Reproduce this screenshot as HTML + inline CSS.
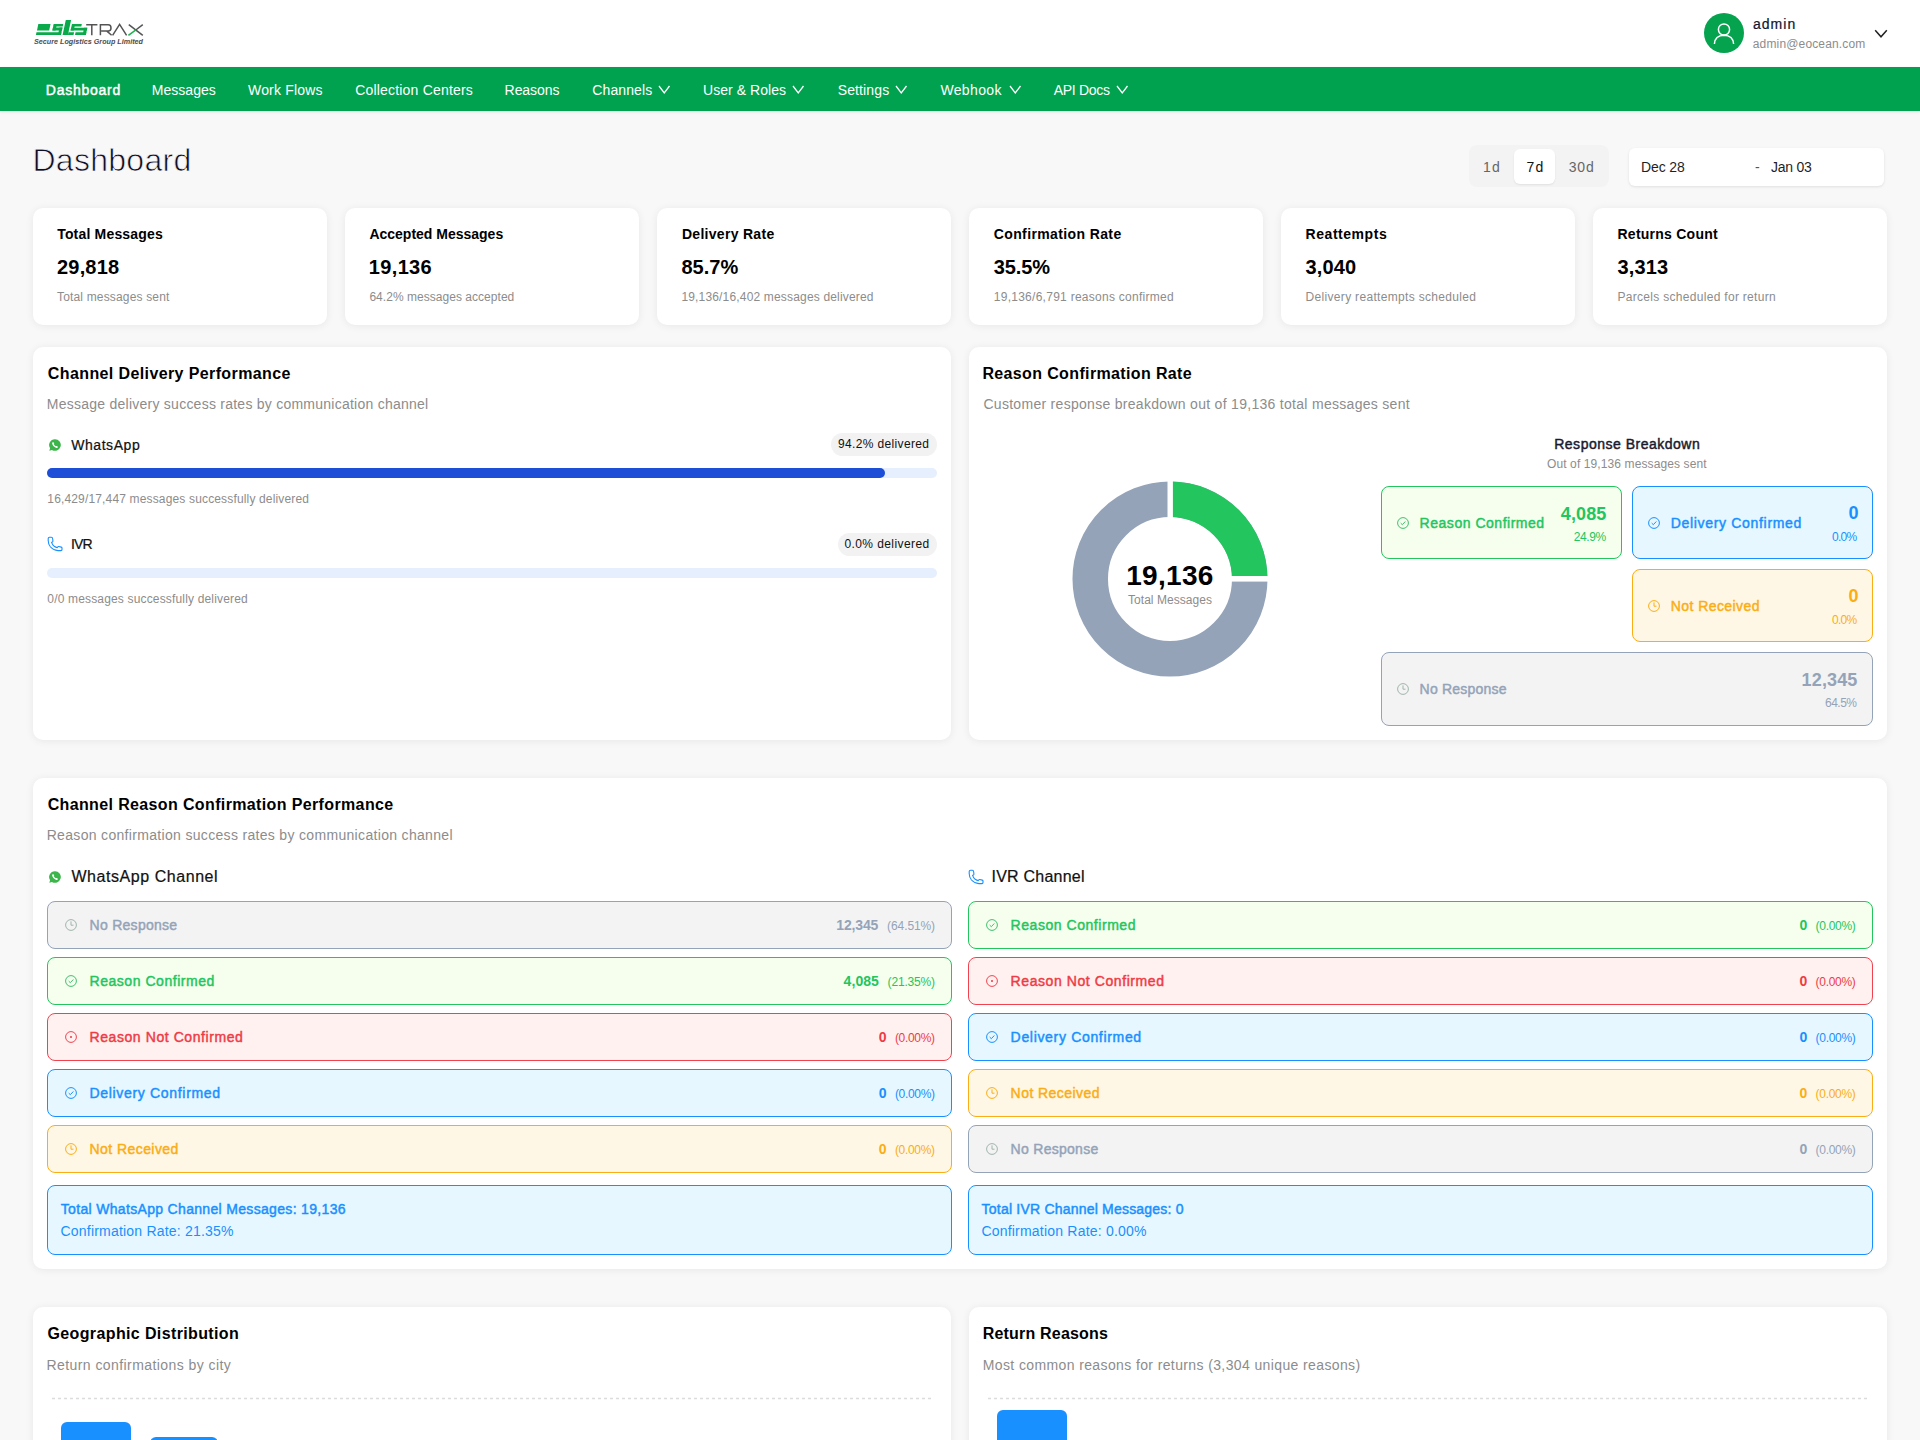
<!DOCTYPE html>
<html lang="en">
<head>
<meta charset="utf-8">
<title>SLS Trax - Dashboard</title>
<style>
  html, body { margin:0; padding:0; }
  body { width:1920px; height:1440px; overflow:hidden; position:relative; background:#f8f8f8; font-family:"Liberation Sans", sans-serif; }
  .abs { position:absolute; }
  .t { position:absolute; white-space:nowrap; line-height:1; font-family:"Liberation Sans", sans-serif; }
  header.top { position:absolute; left:0; top:0; width:1920px; height:67px; background:#fff; }
  nav.main { position:absolute; left:0; top:67px; width:1920px; height:44px; background:#01a24f; box-shadow:0 1px 3px rgba(0,0,0,0.10); }
  .card { position:absolute; background:#fff; border-radius:10px; box-shadow:0 1px 8px rgba(0,0,0,0.07); }
  .pill { position:absolute; background:#f2f2f2; border-radius:12px; }
  .track { position:absolute; height:10px; border-radius:5px; background:#e5effd; }
  .fill { position:absolute; height:10px; border-radius:5px; background:#1d4ed8; }
  .box { position:absolute; box-sizing:border-box; border:1px solid; border-radius:8px; }
  .g { border-color:#22c55e; background:#f6ffed; }
  .b { border-color:#1890ff; background:#e6f7ff; }
  .o { border-color:#faad14; background:#fff7e6; }
  .r { border-color:#f0434f; background:#fff1f0; }
  .s { border-color:#94a3b8; background:#f3f3f3; }
  .ico { position:absolute; }
  .dots { position:absolute; height:0; border-top:1.5px dashed #d9d9d9; }
  .bar { position:absolute; background:#1890ff; border-radius:6px 6px 0 0; }
</style>
</head>
<body>
<header class="top">
  <!-- logo -->
  <svg class="abs" style="left:0;top:0" width="160" height="50" viewBox="0 0 160 50">
    <g fill="#0aa94a" transform="translate(7.44,0) skewX(-12)">
      <rect x="36" y="24" width="12.2" height="6.4"/>
      <rect x="35.9" y="32.25" width="25" height="2.75"/>
      <rect x="51.6" y="24" width="9.3" height="2.5"/>
      <rect x="51.4" y="24" width="3.2" height="6.4"/>
      <rect x="51.4" y="27.6" width="9.5" height="2.8"/>
      <rect x="57.9" y="27.6" width="3" height="7.4"/>
      <polygon points="65.8,20 71.1,20 67.9,35 62.6,35" transform="skewX(12) translate(-7.44,0) translate(0,0)"/>
      <rect x="67.9" y="32.25" width="5.6" height="2.75"/>
      <rect x="70.5" y="24" width="9" height="2.5"/>
      <rect x="69.6" y="24" width="3.2" height="6.4"/>
      <rect x="69.6" y="27.8" width="16.2" height="2.6"/>
      <rect x="82.6" y="27.8" width="3.2" height="7.2"/>
      <rect x="75" y="32.25" width="10.8" height="2.75"/>
    </g>
    <g fill="none" stroke="#545454" stroke-width="1.5">
      <path d="M86.2 24.7 H97.4 M91.8 24.7 V35.3"/>
      <path d="M100.4 35.3 V24.7 H108.2 Q111 24.7 111 27.9 Q111 30.9 108.2 30.9 H101.2 M106.6 30.9 L111.6 35.3"/>
      <path d="M112.6 35.3 L119.6 24.4 L126.6 35.3"/>
      <path d="M128.8 24.6 L142.8 35.3"/>
      <path d="M142.8 24.6 L135.8 30"/>
    </g>
    <path d="M135.9 29.9 L128.4 35.4" stroke="#1fb34e" stroke-width="1.6" fill="none"/>
    <text x="34" y="44.2" font-family="Liberation Sans" font-weight="700" font-style="italic" font-size="8" fill="#4d4d4d" letter-spacing="0.02" textLength="109" lengthAdjust="spacingAndGlyphs">Secure Logistics Group Limited</text>
  </svg>
  <!-- avatar -->
  <svg class="abs" style="left:1704px;top:13px" width="40" height="40" viewBox="0 0 40 40">
    <circle cx="20" cy="20" r="20" fill="#06a34f"/>
    <circle cx="20" cy="16.5" r="5.6" fill="none" stroke="#fff" stroke-width="1.5"/>
    <path d="M10.4 31 Q10.9 22.5 20 22.3 Q29.1 22.5 29.6 31" fill="none" stroke="#fff" stroke-width="1.5"/>
  </svg>
  <svg class="abs" style="left:1874px;top:29px" width="14" height="10" viewBox="0 0 14 10">
    <path d="M1.2 1.2 L7 7.8 L12.8 1.2" fill="none" stroke="#222" stroke-width="1.5"/>
  </svg>
</header>
<nav class="main">
  <svg class="abs" style="left:658px;top:18px" width="13" height="10" viewBox="0 0 13 10"><path d="M1 1 L6.25 8 L11.5 1" fill="none" stroke="#fff" stroke-width="1.3"/></svg>
  <svg class="abs" style="left:792px;top:18px" width="13" height="10" viewBox="0 0 13 10"><path d="M1 1 L6.25 8 L11.5 1" fill="none" stroke="#fff" stroke-width="1.3"/></svg>
  <svg class="abs" style="left:895px;top:18px" width="13" height="10" viewBox="0 0 13 10"><path d="M1 1 L6.25 8 L11.5 1" fill="none" stroke="#fff" stroke-width="1.3"/></svg>
  <svg class="abs" style="left:1008.5px;top:18px" width="13" height="10" viewBox="0 0 13 10"><path d="M1 1 L6.25 8 L11.5 1" fill="none" stroke="#fff" stroke-width="1.3"/></svg>
  <svg class="abs" style="left:1115.5px;top:18px" width="13" height="10" viewBox="0 0 13 10"><path d="M1 1 L6.25 8 L11.5 1" fill="none" stroke="#fff" stroke-width="1.3"/></svg>
</nav>

<!-- time range -->
<div class="abs" style="left:1469px;top:145px;width:140px;height:42px;background:#f3f3f3;border-radius:8px"></div>
<div class="abs" style="left:1514px;top:149px;width:41px;height:35px;background:#fff;border-radius:6px;box-shadow:0 1px 2px rgba(0,0,0,0.08)"></div>
<div class="abs" style="left:1629px;top:148px;width:255px;height:38px;background:#fff;border-radius:6px;box-shadow:0 1px 3px rgba(0,0,0,0.10)"></div>

<!-- stat cards -->
<div class="card" style="left:33px;top:208px;width:294px;height:117px"></div>
<div class="card" style="left:345px;top:208px;width:294px;height:117px"></div>
<div class="card" style="left:657px;top:208px;width:294px;height:117px"></div>
<div class="card" style="left:969px;top:208px;width:294px;height:117px"></div>
<div class="card" style="left:1281px;top:208px;width:294px;height:117px"></div>
<div class="card" style="left:1593px;top:208px;width:294px;height:117px"></div>

<!-- row 2 -->
<div class="card" style="left:33px;top:347px;width:918px;height:393px"></div>
<div class="card" style="left:969px;top:347px;width:918px;height:393px"></div>

<div class="pill" style="left:830.5px;top:433px;width:106px;height:23px"></div>
<div class="track" style="left:47px;top:468px;width:890px"></div>
<div class="fill" style="left:47px;top:468px;width:838px"></div>
<div class="pill" style="left:837.5px;top:533px;width:99px;height:23px"></div>
<div class="track" style="left:47px;top:568px;width:890px"></div>

<!-- whatsapp icon -->
<svg class="ico" style="left:48px;top:438px" width="14" height="14" viewBox="0 0 14 14">
  <path d="M7 1.2 A5.8 5.8 0 1 1 3.9 11.9 L1.3 12.7 L2.1 10.2 A5.8 5.8 0 0 1 7 1.2 Z" fill="#3cb54a"/>
  <path d="M4.6 4.3 Q5.2 3.8 5.6 4.4 L6.2 5.5 Q6.3 5.9 5.9 6.2 Q6.6 7.6 7.9 8.2 Q8.2 7.8 8.6 7.9 L9.7 8.5 Q10.1 8.9 9.7 9.4 Q8.8 10.3 7.4 9.6 Q4.9 8.3 4.2 6 Q3.9 5 4.6 4.3 Z" fill="#fff"/>
</svg>
<!-- phone icon -->
<svg class="ico" style="left:47px;top:536px" width="16" height="16" viewBox="0 0 16 16">
  <path d="M2.5 1.3 L4.3 1.3 Q5.6 1.3 5.7 3 L5.9 5.2 Q5.9 5.8 5.3 6.1 L4.6 6.4 Q5.2 8.6 7.2 10.3 Q8.8 11.4 10.2 11.6 L10.8 10.9 Q11.1 10.4 11.7 10.5 L14.3 11.1 Q15 11.3 15 12 L15 13.6 Q15 14.6 14 14.6 L11 14.6 Q6.5 14.3 3.5 11 Q1.2 8.3 1.2 4.5 L1.2 2.6 Q1.2 1.3 2.5 1.3 Z" fill="none" stroke="#1890ff" stroke-width="1.1"/>
</svg>

<!-- donut -->
<svg class="abs" style="left:1070px;top:479px" width="200" height="200" viewBox="0 0 200 200">
  <circle cx="100" cy="100" r="79.75" fill="none" stroke="#94a3b8" stroke-width="35.5"/>
  <path d="M100 2.5 A97.5 97.5 0 0 1 197.5 100 L162 100 A62 62 0 0 0 100 38 Z" fill="#22c55e"/>
  <rect x="97.5" y="0" width="5.4" height="40" fill="#fff"/>
  <rect x="160" y="97" width="40" height="5.6" fill="#fff"/>
</svg>

<!-- breakdown boxes -->
<div class="box g" style="left:1381px;top:486px;width:241px;height:73px"></div>
<div class="box b" style="left:1632px;top:486px;width:241px;height:73px"></div>
<div class="box o" style="left:1632px;top:569px;width:241px;height:73px"></div>
<div class="box s" style="left:1381px;top:652px;width:492px;height:74px"></div>

<!-- row 3 -->
<div class="card" style="left:33px;top:778px;width:1854px;height:491px"></div>
<svg class="ico" style="left:48px;top:870px" width="14" height="14" viewBox="0 0 14 14">
  <path d="M7 1.2 A5.8 5.8 0 1 1 3.9 11.9 L1.3 12.7 L2.1 10.2 A5.8 5.8 0 0 1 7 1.2 Z" fill="#3cb54a"/>
  <path d="M4.6 4.3 Q5.2 3.8 5.6 4.4 L6.2 5.5 Q6.3 5.9 5.9 6.2 Q6.6 7.6 7.9 8.2 Q8.2 7.8 8.6 7.9 L9.7 8.5 Q10.1 8.9 9.7 9.4 Q8.8 10.3 7.4 9.6 Q4.9 8.3 4.2 6 Q3.9 5 4.6 4.3 Z" fill="#fff"/>
</svg>
<svg class="ico" style="left:968px;top:869px" width="16" height="16" viewBox="0 0 16 16">
  <path d="M2.5 1.3 L4.3 1.3 Q5.6 1.3 5.7 3 L5.9 5.2 Q5.9 5.8 5.3 6.1 L4.6 6.4 Q5.2 8.6 7.2 10.3 Q8.8 11.4 10.2 11.6 L10.8 10.9 Q11.1 10.4 11.7 10.5 L14.3 11.1 Q15 11.3 15 12 L15 13.6 Q15 14.6 14 14.6 L11 14.6 Q6.5 14.3 3.5 11 Q1.2 8.3 1.2 4.5 L1.2 2.6 Q1.2 1.3 2.5 1.3 Z" fill="none" stroke="#1890ff" stroke-width="1.1"/>
</svg>
<div class="box s" style="left:47px;top:901px;width:905px;height:48px"></div>
<svg class="ico" style="left:65.20px;top:919.00px" width="12" height="12" viewBox="0 0 12 12"><circle cx="6" cy="6" r="5.4" fill="none" stroke="#9fb5aa" stroke-width="1"/><path d="M6 2.4 V6.2 H8.5" fill="none" stroke="#9fb5aa" stroke-width="1"/></svg>
<div class="box g" style="left:47px;top:957px;width:905px;height:48px"></div>
<svg class="ico" style="left:65.20px;top:975.00px" width="12" height="12" viewBox="0 0 12 12"><circle cx="6" cy="6" r="5.4" fill="none" stroke="#3fbf6f" stroke-width="1"/><path d="M3.7 6.1 L5.3 7.7 L8.3 4.5" fill="none" stroke="#3fbf6f" stroke-width="1"/></svg>
<div class="box r" style="left:47px;top:1013px;width:905px;height:48px"></div>
<svg class="ico" style="left:65.20px;top:1031.00px" width="12" height="12" viewBox="0 0 12 12"><circle cx="6" cy="6" r="5.4" fill="none" stroke="#f0434f" stroke-width="1"/><rect x="5.1" y="5.1" width="1.8" height="1.8" fill="#f0434f"/></svg>
<div class="box b" style="left:47px;top:1069px;width:905px;height:48px"></div>
<svg class="ico" style="left:65.20px;top:1087.00px" width="12" height="12" viewBox="0 0 12 12"><circle cx="6" cy="6" r="5.4" fill="none" stroke="#1890ff" stroke-width="1"/><path d="M3.7 6.1 L5.3 7.7 L8.3 4.5" fill="none" stroke="#1890ff" stroke-width="1"/></svg>
<div class="box o" style="left:47px;top:1125px;width:905px;height:48px"></div>
<svg class="ico" style="left:65.20px;top:1143.00px" width="12" height="12" viewBox="0 0 12 12"><circle cx="6" cy="6" r="5.4" fill="none" stroke="#faad14" stroke-width="1"/><path d="M6 2.4 V6.2 H8.5" fill="none" stroke="#faad14" stroke-width="1"/></svg>
<div class="box g" style="left:968px;top:901px;width:905px;height:48px"></div>
<svg class="ico" style="left:986.10px;top:919.00px" width="12" height="12" viewBox="0 0 12 12"><circle cx="6" cy="6" r="5.4" fill="none" stroke="#3fbf6f" stroke-width="1"/><path d="M3.7 6.1 L5.3 7.7 L8.3 4.5" fill="none" stroke="#3fbf6f" stroke-width="1"/></svg>
<div class="box r" style="left:968px;top:957px;width:905px;height:48px"></div>
<svg class="ico" style="left:986.10px;top:975.00px" width="12" height="12" viewBox="0 0 12 12"><circle cx="6" cy="6" r="5.4" fill="none" stroke="#f0434f" stroke-width="1"/><rect x="5.1" y="5.1" width="1.8" height="1.8" fill="#f0434f"/></svg>
<div class="box b" style="left:968px;top:1013px;width:905px;height:48px"></div>
<svg class="ico" style="left:986.10px;top:1031.00px" width="12" height="12" viewBox="0 0 12 12"><circle cx="6" cy="6" r="5.4" fill="none" stroke="#1890ff" stroke-width="1"/><path d="M3.7 6.1 L5.3 7.7 L8.3 4.5" fill="none" stroke="#1890ff" stroke-width="1"/></svg>
<div class="box o" style="left:968px;top:1069px;width:905px;height:48px"></div>
<svg class="ico" style="left:986.10px;top:1087.00px" width="12" height="12" viewBox="0 0 12 12"><circle cx="6" cy="6" r="5.4" fill="none" stroke="#faad14" stroke-width="1"/><path d="M6 2.4 V6.2 H8.5" fill="none" stroke="#faad14" stroke-width="1"/></svg>
<div class="box s" style="left:968px;top:1125px;width:905px;height:48px"></div>
<svg class="ico" style="left:986.10px;top:1143.00px" width="12" height="12" viewBox="0 0 12 12"><circle cx="6" cy="6" r="5.4" fill="none" stroke="#9fb5aa" stroke-width="1"/><path d="M6 2.4 V6.2 H8.5" fill="none" stroke="#9fb5aa" stroke-width="1"/></svg>
<svg class="ico" style="left:1397.00px;top:517.00px" width="12" height="12" viewBox="0 0 12 12"><circle cx="6" cy="6" r="5.4" fill="none" stroke="#3fbf6f" stroke-width="1"/><path d="M3.7 6.1 L5.3 7.7 L8.3 4.5" fill="none" stroke="#3fbf6f" stroke-width="1"/></svg>
<svg class="ico" style="left:1648.10px;top:517.00px" width="12" height="12" viewBox="0 0 12 12"><circle cx="6" cy="6" r="5.4" fill="none" stroke="#1890ff" stroke-width="1"/><path d="M3.7 6.1 L5.3 7.7 L8.3 4.5" fill="none" stroke="#1890ff" stroke-width="1"/></svg>
<svg class="ico" style="left:1648.10px;top:600.00px" width="12" height="12" viewBox="0 0 12 12"><circle cx="6" cy="6" r="5.4" fill="none" stroke="#faad14" stroke-width="1"/><path d="M6 2.4 V6.2 H8.5" fill="none" stroke="#faad14" stroke-width="1"/></svg>
<svg class="ico" style="left:1397.00px;top:683.00px" width="12" height="12" viewBox="0 0 12 12"><circle cx="6" cy="6" r="5.4" fill="none" stroke="#9fb5aa" stroke-width="1"/><path d="M6 2.4 V6.2 H8.5" fill="none" stroke="#9fb5aa" stroke-width="1"/></svg>
<div class="box b" style="left:47px;top:1185px;width:905px;height:70px"></div>
<div class="box b" style="left:968px;top:1185px;width:905px;height:70px"></div>

<!-- row 4 -->
<div class="card" style="left:33px;top:1307px;width:918px;height:200px"></div>
<div class="card" style="left:969px;top:1307px;width:918px;height:200px"></div>
<svg class="abs" style="left:52px;top:1397px" width="880" height="3"><line x1="0" y1="1.5" x2="880" y2="1.5" stroke="#dcdcdc" stroke-width="1.5" stroke-dasharray="3 3"/></svg>
<svg class="abs" style="left:988px;top:1397px" width="880" height="3"><line x1="0" y1="1.5" x2="880" y2="1.5" stroke="#dcdcdc" stroke-width="1.5" stroke-dasharray="3 3"/></svg>
<div class="bar" style="left:61px;top:1422px;width:70px;height:40px"></div>
<div class="bar" style="left:150px;top:1437px;width:68px;height:40px"></div>
<div class="bar" style="left:997px;top:1410px;width:70px;height:40px"></div>

<div class="t" style="left:1752.91px;top:16.75px;font-size:14px;font-weight:400;color:#0f1733;letter-spacing:1.034px;-webkit-text-stroke:0.22px #0f1733;">admin</div>
<div class="t" style="left:1752.80px;top:37.70px;font-size:12px;font-weight:400;color:#8c8c8c;letter-spacing:0.151px;">admin@eocean.com</div>
<div class="t" style="left:45.83px;top:83.00px;font-size:14px;font-weight:400;color:#fff;letter-spacing:0.743px;-webkit-text-stroke:0.45px #fff;">Dashboard</div>
<div class="t" style="left:151.80px;top:83.00px;font-size:14px;font-weight:400;color:#fff;letter-spacing:0.028px;">Messages</div>
<div class="t" style="left:248.00px;top:83.00px;font-size:14px;font-weight:400;color:#fff;letter-spacing:0.183px;">Work Flows</div>
<div class="t" style="left:355.20px;top:83.00px;font-size:14px;font-weight:400;color:#fff;letter-spacing:0.189px;">Collection Centers</div>
<div class="t" style="left:504.60px;top:83.00px;font-size:14px;font-weight:400;color:#fff;letter-spacing:-0.059px;">Reasons</div>
<div class="t" style="left:592.30px;top:83.00px;font-size:14px;font-weight:400;color:#fff;letter-spacing:0.107px;">Channels</div>
<div class="t" style="left:703.00px;top:83.00px;font-size:14px;font-weight:400;color:#fff;letter-spacing:0.048px;">User &amp; Roles</div>
<div class="t" style="left:837.70px;top:83.00px;font-size:14px;font-weight:400;color:#fff;letter-spacing:0.131px;">Settings</div>
<div class="t" style="left:940.40px;top:83.00px;font-size:14px;font-weight:400;color:#fff;letter-spacing:0.368px;">Webhook</div>
<div class="t" style="left:1053.70px;top:83.00px;font-size:14px;font-weight:400;color:#fff;letter-spacing:-0.293px;">API Docs</div>
<div class="t" style="left:32.40px;top:143.60px;font-size:32px;font-weight:400;color:#0e0e26;letter-spacing:0.294px;-webkit-text-stroke:0.75px #f8f8f8;">Dashboard</div>
<div class="t" style="left:1483.00px;top:160.00px;font-size:14px;font-weight:400;color:#666;letter-spacing:1.214px;">1d</div>
<div class="t" style="left:1526.50px;top:160.00px;font-size:14px;font-weight:400;color:#111;letter-spacing:1.214px;">7d</div>
<div class="t" style="left:1568.70px;top:160.00px;font-size:14px;font-weight:400;color:#666;letter-spacing:0.864px;">30d</div>
<div class="t" style="left:1641.00px;top:159.70px;font-size:14px;font-weight:400;color:#1f1f1f;letter-spacing:-0.114px;">Dec 28</div>
<div class="t" style="left:1755.00px;top:159.70px;font-size:14px;font-weight:400;color:#555;letter-spacing:0.000px;">-</div>
<div class="t" style="left:1771.00px;top:159.70px;font-size:14px;font-weight:400;color:#1f1f1f;letter-spacing:-0.250px;">Jan 03</div>
<div class="t" style="left:57.20px;top:227.20px;font-size:14px;font-weight:700;color:#000;letter-spacing:0.182px;">Total Messages</div>
<div class="t" style="left:57.00px;top:257.00px;font-size:20px;font-weight:700;color:#000;letter-spacing:0.190px;">29,818</div>
<div class="t" style="left:57.00px;top:291.00px;font-size:12px;font-weight:400;color:#8c8c8c;letter-spacing:0.164px;">Total messages sent</div>
<div class="t" style="left:369.40px;top:227.20px;font-size:14px;font-weight:700;color:#000;letter-spacing:-0.003px;">Accepted Messages</div>
<div class="t" style="left:368.80px;top:257.00px;font-size:20px;font-weight:700;color:#000;letter-spacing:0.350px;">19,136</div>
<div class="t" style="left:369.40px;top:291.00px;font-size:12px;font-weight:400;color:#8c8c8c;letter-spacing:0.036px;">64.2% messages accepted</div>
<div class="t" style="left:681.90px;top:227.20px;font-size:14px;font-weight:700;color:#000;letter-spacing:0.297px;">Delivery Rate</div>
<div class="t" style="left:681.40px;top:257.00px;font-size:20px;font-weight:700;color:#000;letter-spacing:0.019px;">85.7%</div>
<div class="t" style="left:681.40px;top:291.00px;font-size:12px;font-weight:400;color:#8c8c8c;letter-spacing:0.170px;">19,136/16,402 messages delivered</div>
<div class="t" style="left:993.75px;top:227.20px;font-size:14px;font-weight:700;color:#000;letter-spacing:0.381px;">Confirmation Rate</div>
<div class="t" style="left:993.75px;top:257.00px;font-size:20px;font-weight:700;color:#000;letter-spacing:-0.094px;">35.5%</div>
<div class="t" style="left:993.75px;top:291.00px;font-size:12px;font-weight:400;color:#8c8c8c;letter-spacing:0.269px;">19,136/6,791 reasons confirmed</div>
<div class="t" style="left:1305.60px;top:227.20px;font-size:14px;font-weight:700;color:#000;letter-spacing:0.538px;">Reattempts</div>
<div class="t" style="left:1305.60px;top:257.00px;font-size:20px;font-weight:700;color:#000;letter-spacing:0.094px;">3,040</div>
<div class="t" style="left:1305.60px;top:291.00px;font-size:12px;font-weight:400;color:#8c8c8c;letter-spacing:0.317px;">Delivery reattempts scheduled</div>
<div class="t" style="left:1617.50px;top:227.20px;font-size:14px;font-weight:700;color:#000;letter-spacing:0.246px;">Returns Count</div>
<div class="t" style="left:1617.50px;top:257.00px;font-size:20px;font-weight:700;color:#000;letter-spacing:0.144px;">3,313</div>
<div class="t" style="left:1617.50px;top:291.00px;font-size:12px;font-weight:400;color:#8c8c8c;letter-spacing:0.300px;">Parcels scheduled for return</div>
<div class="t" style="left:47.85px;top:365.70px;font-size:16px;font-weight:700;color:#000;letter-spacing:0.387px;">Channel Delivery Performance</div>
<div class="t" style="left:46.85px;top:396.75px;font-size:14px;font-weight:400;color:#8c8c8c;letter-spacing:0.246px;">Message delivery success rates by communication channel</div>
<div class="t" style="left:71.21px;top:437.60px;font-size:14px;font-weight:400;color:#111;letter-spacing:0.554px;-webkit-text-stroke:0.22px #111;">WhatsApp</div>
<div class="t" style="left:838.00px;top:437.90px;font-size:12px;font-weight:400;color:#111;letter-spacing:0.351px;">94.2% delivered</div>
<div class="t" style="left:47.30px;top:493.00px;font-size:12px;font-weight:400;color:#8c8c8c;letter-spacing:0.156px;">16,429/17,447 messages successfully delivered</div>
<div class="t" style="left:70.91px;top:536.70px;font-size:14px;font-weight:400;color:#111;letter-spacing:-0.874px;-webkit-text-stroke:0.22px #111;">IVR</div>
<div class="t" style="left:844.40px;top:537.80px;font-size:12px;font-weight:400;color:#111;letter-spacing:0.415px;">0.0% delivered</div>
<div class="t" style="left:47.30px;top:593.00px;font-size:12px;font-weight:400;color:#8c8c8c;letter-spacing:0.165px;">0/0 messages successfully delivered</div>
<div class="t" style="left:982.40px;top:366.00px;font-size:16px;font-weight:700;color:#000;letter-spacing:0.365px;">Reason Confirmation Rate</div>
<div class="t" style="left:983.40px;top:397.00px;font-size:14px;font-weight:400;color:#8c8c8c;letter-spacing:0.295px;">Customer response breakdown out of 19,136 total messages sent</div>
<div class="t" style="left:1126.20px;top:562.40px;font-size:28px;font-weight:700;color:#000;letter-spacing:0.306px;">19,136</div>
<div class="t" style="left:1128.00px;top:593.70px;font-size:12px;font-weight:400;color:#8c8c8c;letter-spacing:0.048px;">Total Messages</div>
<div class="t" style="left:1554.22px;top:436.75px;font-size:14px;font-weight:400;color:#1a1a2e;letter-spacing:0.504px;-webkit-text-stroke:0.45px #1a1a2e;">Response Breakdown</div>
<div class="t" style="left:1547.00px;top:457.50px;font-size:12px;font-weight:400;color:#8c8c8c;letter-spacing:0.110px;">Out of 19,136 messages sent</div>
<div class="t" style="left:1419.62px;top:515.80px;font-size:14px;font-weight:400;color:#22c55e;letter-spacing:0.521px;-webkit-text-stroke:0.45px #22c55e;">Reason Confirmed</div>
<div class="t" style="left:1560.80px;top:505.00px;font-size:18px;font-weight:700;color:#22c55e;letter-spacing:0.117px;">4,085</div>
<div class="t" style="left:1573.80px;top:531.00px;font-size:12px;font-weight:400;color:#22c55e;letter-spacing:-0.414px;">24.9%</div>
<div class="t" style="left:1670.72px;top:515.80px;font-size:14px;font-weight:400;color:#1890ff;letter-spacing:0.682px;-webkit-text-stroke:0.45px #1890ff;">Delivery Confirmed</div>
<div class="t" style="left:1848.60px;top:504.30px;font-size:18px;font-weight:700;color:#1890ff;letter-spacing:0.000px;">0</div>
<div class="t" style="left:1832.00px;top:531.00px;font-size:12px;font-weight:400;color:#1890ff;letter-spacing:-0.694px;">0.0%</div>
<div class="t" style="left:1670.72px;top:598.80px;font-size:14px;font-weight:400;color:#faad14;letter-spacing:0.436px;-webkit-text-stroke:0.45px #faad14;">Not Received</div>
<div class="t" style="left:1848.60px;top:587.30px;font-size:18px;font-weight:700;color:#faad14;letter-spacing:0.000px;">0</div>
<div class="t" style="left:1832.00px;top:614.00px;font-size:12px;font-weight:400;color:#faad14;letter-spacing:-0.694px;">0.0%</div>
<div class="t" style="left:1419.62px;top:681.90px;font-size:14px;font-weight:400;color:#94a3b8;letter-spacing:0.211px;-webkit-text-stroke:0.45px #94a3b8;">No Response</div>
<div class="t" style="left:1801.60px;top:670.80px;font-size:18px;font-weight:700;color:#94a3b8;letter-spacing:0.131px;">12,345</div>
<div class="t" style="left:1825.00px;top:696.70px;font-size:12px;font-weight:400;color:#94a3b8;letter-spacing:-0.514px;">64.5%</div>
<div class="t" style="left:47.66px;top:797.10px;font-size:16px;font-weight:700;color:#000;letter-spacing:0.366px;">Channel Reason Confirmation Performance</div>
<div class="t" style="left:46.66px;top:827.90px;font-size:14px;font-weight:400;color:#8c8c8c;letter-spacing:0.322px;">Reason confirmation success rates by communication channel</div>
<div class="t" style="left:71.41px;top:869.30px;font-size:16px;font-weight:400;color:#111;letter-spacing:0.558px;-webkit-text-stroke:0.22px #111;">WhatsApp Channel</div>
<div class="t" style="left:991.51px;top:869.20px;font-size:16px;font-weight:400;color:#111;letter-spacing:0.222px;-webkit-text-stroke:0.22px #111;">IVR Channel</div>
<div class="t" style="left:89.52px;top:918.00px;font-size:14px;font-weight:400;color:#94a3b8;letter-spacing:0.281px;-webkit-text-stroke:0.45px #94a3b8;">No Response</div>
<div class="t" style="left:887.10px;top:920.00px;font-size:12px;font-weight:400;color:#94a3b8;letter-spacing:-0.099px;">(64.51%)</div>
<div class="t" style="left:836.30px;top:918.00px;font-size:14px;font-weight:700;color:#94a3b8;letter-spacing:-0.147px;">12,345</div>
<div class="t" style="left:89.52px;top:974.00px;font-size:14px;font-weight:400;color:#22c55e;letter-spacing:0.541px;-webkit-text-stroke:0.45px #22c55e;">Reason Confirmed</div>
<div class="t" style="left:887.60px;top:976.00px;font-size:12px;font-weight:400;color:#22c55e;letter-spacing:-0.171px;">(21.35%)</div>
<div class="t" style="left:843.60px;top:974.00px;font-size:14px;font-weight:700;color:#22c55e;letter-spacing:0.063px;">4,085</div>
<div class="t" style="left:89.52px;top:1030.00px;font-size:14px;font-weight:400;color:#ef3b45;letter-spacing:0.576px;-webkit-text-stroke:0.45px #ef3b45;">Reason Not Confirmed</div>
<div class="t" style="left:894.90px;top:1032.00px;font-size:12px;font-weight:400;color:#ef3b45;letter-spacing:-0.304px;">(0.00%)</div>
<div class="t" style="left:878.80px;top:1030.00px;font-size:14px;font-weight:700;color:#ef3b45;letter-spacing:0.000px;">0</div>
<div class="t" style="left:89.52px;top:1086.00px;font-size:14px;font-weight:400;color:#1890ff;letter-spacing:0.677px;-webkit-text-stroke:0.45px #1890ff;">Delivery Confirmed</div>
<div class="t" style="left:894.90px;top:1088.00px;font-size:12px;font-weight:400;color:#1890ff;letter-spacing:-0.304px;">(0.00%)</div>
<div class="t" style="left:878.80px;top:1086.00px;font-size:14px;font-weight:700;color:#1890ff;letter-spacing:0.000px;">0</div>
<div class="t" style="left:89.52px;top:1142.00px;font-size:14px;font-weight:400;color:#faad14;letter-spacing:0.436px;-webkit-text-stroke:0.45px #faad14;">Not Received</div>
<div class="t" style="left:894.90px;top:1144.00px;font-size:12px;font-weight:400;color:#faad14;letter-spacing:-0.304px;">(0.00%)</div>
<div class="t" style="left:878.80px;top:1142.00px;font-size:14px;font-weight:700;color:#faad14;letter-spacing:0.000px;">0</div>
<div class="t" style="left:1010.62px;top:918.00px;font-size:14px;font-weight:400;color:#22c55e;letter-spacing:0.541px;-webkit-text-stroke:0.45px #22c55e;">Reason Confirmed</div>
<div class="t" style="left:1815.60px;top:920.00px;font-size:12px;font-weight:400;color:#22c55e;letter-spacing:-0.304px;">(0.00%)</div>
<div class="t" style="left:1799.50px;top:918.00px;font-size:14px;font-weight:700;color:#22c55e;letter-spacing:0.000px;">0</div>
<div class="t" style="left:1010.62px;top:974.00px;font-size:14px;font-weight:400;color:#ef3b45;letter-spacing:0.576px;-webkit-text-stroke:0.45px #ef3b45;">Reason Not Confirmed</div>
<div class="t" style="left:1815.60px;top:976.00px;font-size:12px;font-weight:400;color:#ef3b45;letter-spacing:-0.304px;">(0.00%)</div>
<div class="t" style="left:1799.50px;top:974.00px;font-size:14px;font-weight:700;color:#ef3b45;letter-spacing:0.000px;">0</div>
<div class="t" style="left:1010.62px;top:1030.00px;font-size:14px;font-weight:400;color:#1890ff;letter-spacing:0.677px;-webkit-text-stroke:0.45px #1890ff;">Delivery Confirmed</div>
<div class="t" style="left:1815.60px;top:1032.00px;font-size:12px;font-weight:400;color:#1890ff;letter-spacing:-0.304px;">(0.00%)</div>
<div class="t" style="left:1799.50px;top:1030.00px;font-size:14px;font-weight:700;color:#1890ff;letter-spacing:0.000px;">0</div>
<div class="t" style="left:1010.62px;top:1086.00px;font-size:14px;font-weight:400;color:#faad14;letter-spacing:0.436px;-webkit-text-stroke:0.45px #faad14;">Not Received</div>
<div class="t" style="left:1815.60px;top:1088.00px;font-size:12px;font-weight:400;color:#faad14;letter-spacing:-0.304px;">(0.00%)</div>
<div class="t" style="left:1799.50px;top:1086.00px;font-size:14px;font-weight:700;color:#faad14;letter-spacing:0.000px;">0</div>
<div class="t" style="left:1010.62px;top:1142.00px;font-size:14px;font-weight:400;color:#94a3b8;letter-spacing:0.281px;-webkit-text-stroke:0.45px #94a3b8;">No Response</div>
<div class="t" style="left:1815.60px;top:1144.00px;font-size:12px;font-weight:400;color:#94a3b8;letter-spacing:-0.304px;">(0.00%)</div>
<div class="t" style="left:1799.50px;top:1142.00px;font-size:14px;font-weight:700;color:#94a3b8;letter-spacing:0.000px;">0</div>
<div class="t" style="left:60.73px;top:1201.70px;font-size:14px;font-weight:400;color:#1890ff;letter-spacing:0.328px;-webkit-text-stroke:0.45px #1890ff;">Total WhatsApp Channel Messages: 19,136</div>
<div class="t" style="left:60.50px;top:1224.20px;font-size:14px;font-weight:400;color:#1890ff;letter-spacing:0.202px;">Confirmation Rate: 21.35%</div>
<div class="t" style="left:981.62px;top:1201.70px;font-size:14px;font-weight:400;color:#1890ff;letter-spacing:0.208px;-webkit-text-stroke:0.45px #1890ff;">Total IVR Channel Messages: 0</div>
<div class="t" style="left:981.40px;top:1224.20px;font-size:14px;font-weight:400;color:#1890ff;letter-spacing:0.206px;">Confirmation Rate: 0.00%</div>
<div class="t" style="left:47.50px;top:1325.75px;font-size:16px;font-weight:700;color:#000;letter-spacing:0.371px;">Geographic Distribution</div>
<div class="t" style="left:46.50px;top:1358.00px;font-size:14px;font-weight:400;color:#8c8c8c;letter-spacing:0.427px;">Return confirmations by city</div>
<div class="t" style="left:982.75px;top:1325.75px;font-size:16px;font-weight:700;color:#000;letter-spacing:0.189px;">Return Reasons</div>
<div class="t" style="left:982.75px;top:1358.00px;font-size:14px;font-weight:400;color:#8c8c8c;letter-spacing:0.382px;">Most common reasons for returns (3,304 unique reasons)</div>
</body>
</html>
